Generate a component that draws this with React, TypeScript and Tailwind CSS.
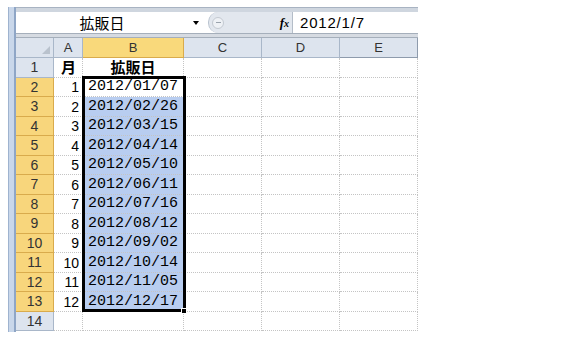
import React from "react";

const dates = [
  "2012/01/07",
  "2012/02/26",
  "2012/03/15",
  "2012/04/14",
  "2012/05/10",
  "2012/06/11",
  "2012/07/16",
  "2012/08/12",
  "2012/09/02",
  "2012/10/14",
  "2012/11/05",
  "2012/12/17",
];

const hdrBg = "bg-[#dde4ee]";

function RowHeader({ n, hl, h }: { n: number; hl: boolean; h: string }) {
  return (
    <div
      className={`${h} w-[38px] shrink-0 flex items-center justify-center border-r border-b text-[14px] text-[#333] ${
        hl ? "bg-[#f8d67c] border-[#d9ab4c]" : `${hdrBg} border-[#a9b7c9]`
      }`}
      style={{ fontFamily: "'Liberation Sans', Arial, sans-serif" }}
    >
      {n}
    </div>
  );
}

function EmptyCells() {
  return (
    <>
      <div className="w-[78px] shrink-0 border-r border-b border-dotted border-[#c4c4c4]" />
      <div className="w-[78px] shrink-0 border-r border-b border-dotted border-[#c4c4c4]" />
      <div className="w-[78px] shrink-0 border-r border-b border-dotted border-[#c4c4c4]" />
    </>
  );
}

export default function App() {
  const sans = { fontFamily: "'Liberation Sans', Arial, sans-serif" };
  const jp = { fontFamily: "'Noto Sans CJK JP', 'Noto Sans', sans-serif" };
  const mono = { fontFamily: "'Liberation Mono', 'DejaVu Sans Mono', monospace" };
  return (
    <div className="w-[567px] h-[340px] bg-white relative overflow-hidden">
      <div className="flex pt-[7px] pl-[8px]">
        {/* left strip */}
        <div className="w-[8px] h-[325px] bg-[#c9d7ea] border-l border-r-2 border-l-[#9fb3cf] border-r-[#8fa6c6]" />
        <div className="w-[402px] flex flex-col relative">
          {/* formula bar */}
          <div className="h-[31px] flex flex-col">
            <div className="h-[5px] bg-[#cfd6df] border-t border-[#a8b3c2]" />
            <div className="h-[21px] flex bg-white">
              <div className="w-[192px] relative flex items-center justify-center">
                <span className="text-[15px] leading-none text-black ml-[-20px]" style={jp}>
                  拡販日
                </span>
                <div className="absolute right-[9px] top-[9px] w-0 h-0 border-l-[3px] border-r-[3px] border-t-[4px] border-l-transparent border-r-transparent border-t-black" />
              </div>
              <div className="w-[84px] bg-[#e2e7ee] rounded-l-[10px] border-l border-[#b9c3cf] flex items-center justify-between pl-[3px] pr-[3px]">
                <div className="w-[12px] h-[12px] rounded-full bg-[#eef1f5] border border-[#c3c9d1] flex items-center justify-center">
                  <div className="w-[5px] h-[1px] bg-[#9aa3ad]" />
                </div>
                <span className="text-[13px] italic font-bold text-black leading-none" style={{ fontFamily: "'Liberation Serif', serif" }}>
                  f<span className="text-[10px]">x</span>
                </span>
              </div>
              <div className="flex-1 border-l border-[#b4bdc8] flex items-center pl-[7px]">
                <span className="text-[15px] leading-none text-black tracking-[0.8px]" style={sans}>
                  2012/1/7
                </span>
              </div>
            </div>
            <div className="h-[5px] bg-[#d6dbe2] border-t border-b border-[#a5afbb]" />
          </div>
          {/* column header */}
          <div className="h-[20px] flex text-[13px] text-[#333]" style={sans}>
            <div className={`w-[38px] shrink-0 ${hdrBg} border-r border-b border-[#a9b7c9] relative`}>
              <div className="absolute right-[3px] bottom-[3px] w-0 h-0" style={{ borderBottom: "8px solid #b9c2cd", borderLeft: "8px solid transparent" }} />
            </div>
            <div className={`w-[29px] shrink-0 ${hdrBg} border-r border-b border-[#a9b7c9] flex items-center justify-center`}>A</div>
            <div className="w-[101px] shrink-0 bg-[#f9d97b] border-r border-b border-[#d9ab4c] flex items-center justify-center">B</div>
            <div className={`w-[78px] shrink-0 ${hdrBg} border-r border-b border-[#a9b7c9] flex items-center justify-center`}>C</div>
            <div className={`w-[78px] shrink-0 ${hdrBg} border-r border-b border-[#a9b7c9] flex items-center justify-center`}>D</div>
            <div className={`w-[78px] shrink-0 ${hdrBg} border-r border-b border-[#8e9bac] flex items-center justify-center`}>E</div>
          </div>
          {/* row 1 */}
          <div className="h-[20px] flex">
            <RowHeader n={1} hl={false} h="h-[20px]" />
            <div className="w-[29px] shrink-0 border-r border-b border-dotted border-[#c4c4c4] flex items-center justify-end pr-[6px] text-[15px] font-bold text-black" style={jp}>
              月
            </div>
            <div className="w-[101px] shrink-0 border-r border-b border-dotted border-[#c4c4c4] flex items-center justify-center text-[15px] font-bold text-black" style={jp}>
              拡販日
            </div>
            <EmptyCells />
          </div>
          {dates.map((d, i) => {
            const h = i % 2 === 0 ? "h-[19px]" : "h-[20px]";
            return (
              <div key={d} className={`${h} flex`}>
                <RowHeader n={i + 2} hl={true} h={h} />
                <div className="w-[29px] shrink-0 border-r border-b border-dotted border-[#c4c4c4] flex items-end leading-[16px] justify-end pr-[3px] pb-[1px] text-[14px] text-black" style={sans}>
                  {i + 1}
                </div>
                <div
                  className={`w-[101px] shrink-0 border-r border-b border-dotted border-[#c4c4c4] flex items-end leading-[16px] justify-end pr-[5px] pb-[1px] text-[15px] text-black ${
                    i === 0 ? "bg-white" : "bg-[#b8cdf0]"
                  }`}
                  style={mono}
                >
                  {d}
                </div>
                <EmptyCells />
              </div>
            );
          })}
          {/* row 14 */}
          <div className="h-[19px] flex">
            <RowHeader n={14} hl={false} h="h-[19px]" />
            <div className="w-[29px] shrink-0 border-r border-b border-dotted border-[#c4c4c4]" />
            <div className="w-[101px] shrink-0 border-r border-b border-dotted border-[#c4c4c4]" />
            <EmptyCells />
          </div>
          {/* selection */}
          <div className="absolute left-[66px] top-[69px] w-[104px] h-[236px] border-[3px] border-black pointer-events-none" />
          <div className="absolute left-[165px] top-[301px] w-[6px] h-[6px] bg-black border border-white" />
        </div>
      </div>
    </div>
  );
}
